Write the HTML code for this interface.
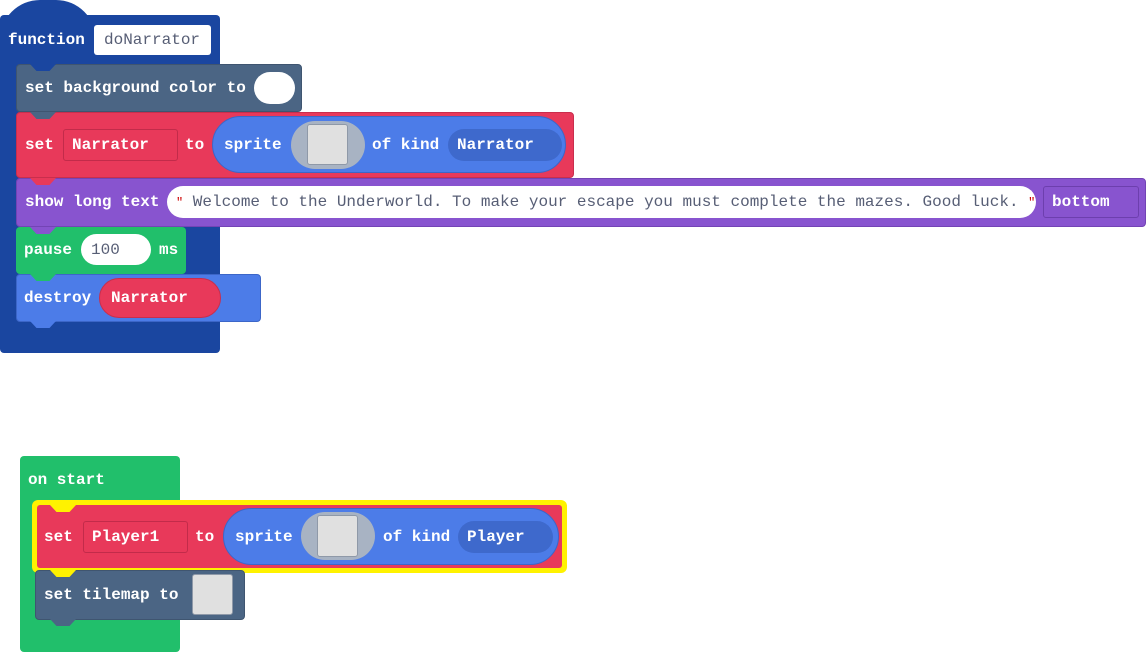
<!DOCTYPE html>
<html><head><style>
body{margin:0;width:1146px;height:652px;background:#fff;position:relative;overflow:hidden;font-family:"Liberation Mono","DejaVu Sans Mono",monospace;font-size:16px;}
div{position:absolute;box-sizing:border-box;}
.t{color:#fff;line-height:20px;white-space:pre;font-weight:bold;}
.g{color:#575e75;line-height:20px;white-space:pre;}
.n{width:26px;height:7px;clip-path:polygon(0 0,100% 0,75% 100%,25% 100%);}
</style></head><body>
<!-- function block -->
<div style="left:0;top:0;width:96px;height:40px;background:#1a46a0;border-radius:48px 48px 0 0;"></div>
<div style="left:0;top:15px;width:220px;height:338px;background:#1a46a0;border-radius:4px;"></div>
<div class="t" style="left:8px;top:30px;">function</div>
<div style="left:94px;top:25px;width:117px;height:30px;background:#fff;border-radius:3px;"></div>
<div class="g" style="left:104px;top:30px;">doNarrator</div>

<div style="left:16px;top:64px;width:286px;height:48px;background:#4b6584;border-radius:4px;border:1px solid #3f5570;"></div>
<div class="n" style="left:30px;top:64px;background:#1a46a0;"></div>
<div class="t" style="left:25px;top:78px;">set background color to</div>
<div style="left:254px;top:72px;width:41px;height:32px;background:#fff;border-radius:16px;"></div>

<div style="left:16px;top:112px;width:558px;height:66px;background:#e8395a;border-radius:4px;border:1px solid #c92e4d;"></div>
<div class="n" style="left:30px;top:112px;background:#4b6584;"></div>
<div class="t" style="left:25px;top:135px;">set</div>
<div style="left:63px;top:129px;width:115px;height:32px;border:1px solid #c22b4a;border-radius:3px;"></div>
<div class="t" style="left:72px;top:135px;">Narrator</div>
<div class="t" style="left:185px;top:135px;">to</div>
<div style="left:212px;top:116px;width:354px;height:57px;background:#4c7ce8;border-radius:29px;border:1px solid #3c66c8;"></div>
<div class="t" style="left:224px;top:135px;">sprite</div>
<div style="left:291px;top:121px;width:74px;height:48px;background:#a8b3c3;border-radius:24px;"></div>
<div style="left:307px;top:124px;width:41px;height:41px;background:#e0e0e0;border-radius:3px;border:1px solid #8f99a8;"></div>
<div class="t" style="left:372px;top:135px;">of kind</div>
<div style="left:448px;top:129px;width:114px;height:32px;background:#3e69cc;border-radius:16px;"></div>
<div class="t" style="left:457px;top:135px;">Narrator</div>

<div style="left:16px;top:178px;width:1130px;height:49px;background:#8854cf;border-radius:4px;border:1px solid #7344b5;"></div>
<div class="n" style="left:30px;top:178px;background:#e8395a;"></div>
<div class="t" style="left:25px;top:192px;">show long text</div>
<div style="left:167px;top:186px;width:869px;height:32px;background:#fff;border-radius:16px;"></div>
<div class="g" style="left:176px;top:192px;"><span style="color:#c00;font-size:12px;">"</span> Welcome to the Underworld. To make your escape you must complete the mazes. Good luck. <span style="color:#c00;font-size:12px;">"</span></div>
<div style="left:1043px;top:186px;width:96px;height:32px;border:1px solid #6d3fae;border-radius:3px;"></div>
<div class="t" style="left:1052px;top:192px;">bottom</div>

<div style="left:16px;top:227px;width:170px;height:47px;background:#21bf6b;border-radius:4px;"></div>
<div class="n" style="left:30px;top:227px;background:#8854cf;"></div>
<div class="t" style="left:24px;top:240px;">pause</div>
<div style="left:81px;top:234px;width:70px;height:31px;background:#fff;border-radius:16px;"></div>
<div class="g" style="left:91px;top:240px;">100</div>
<div class="t" style="left:159px;top:240px;">ms</div>

<div style="left:16px;top:274px;width:245px;height:48px;background:#4c7ce8;border-radius:4px;border:1px solid #3c66c8;"></div>
<div class="n" style="left:30px;top:274px;background:#21bf6b;"></div>
<div class="n" style="left:30px;top:321px;background:#4c7ce8;"></div>
<div class="t" style="left:24px;top:288px;">destroy</div>
<div style="left:99px;top:278px;width:122px;height:40px;background:#e8395a;border-radius:20px;border:1px solid #c92e4d;"></div>
<div class="t" style="left:111px;top:288px;">Narrator</div>

<!-- on start -->
<div style="left:20px;top:456px;width:160px;height:196px;background:#21bf6b;border-radius:4px;"></div>
<div class="t" style="left:28px;top:470px;">on start</div>
<div style="left:32px;top:500px;width:535px;height:73px;background:#fff200;border-radius:6px;"></div>
<div style="left:37px;top:505px;width:525px;height:63px;background:#e8395a;border-radius:3px;"></div>
<div class="n" style="left:50px;top:505px;background:#fff200;"></div>
<div class="t" style="left:44px;top:527px;">set</div>
<div style="left:83px;top:521px;width:105px;height:32px;border:1px solid #c22b4a;border-radius:3px;"></div>
<div class="t" style="left:92px;top:527px;">Player1</div>
<div class="t" style="left:195px;top:527px;">to</div>
<div style="left:223px;top:508px;width:336px;height:57px;background:#4c7ce8;border-radius:29px;border:1px solid #3c66c8;"></div>
<div class="t" style="left:235px;top:527px;">sprite</div>
<div style="left:301px;top:512px;width:74px;height:48px;background:#a8b3c3;border-radius:24px;"></div>
<div style="left:317px;top:515px;width:41px;height:42px;background:#e0e0e0;border-radius:3px;border:1px solid #8f99a8;"></div>
<div class="t" style="left:383px;top:527px;">of kind</div>
<div style="left:458px;top:521px;width:95px;height:32px;background:#3e69cc;border-radius:16px;"></div>
<div class="t" style="left:467px;top:527px;">Player</div>

<div style="left:35px;top:570px;width:210px;height:50px;background:#4b6584;border-radius:4px;border:1px solid #3f5570;"></div>
<div class="n" style="left:50px;top:570px;background:#fff200;"></div>
<div class="n" style="left:50px;top:619px;background:#4b6584;"></div>
<div class="t" style="left:44px;top:585px;">set tilemap to</div>
<div style="left:192px;top:574px;width:41px;height:41px;background:#e0e0e0;border-radius:3px;border:1px solid #8f99a8;"></div>
</body></html>
